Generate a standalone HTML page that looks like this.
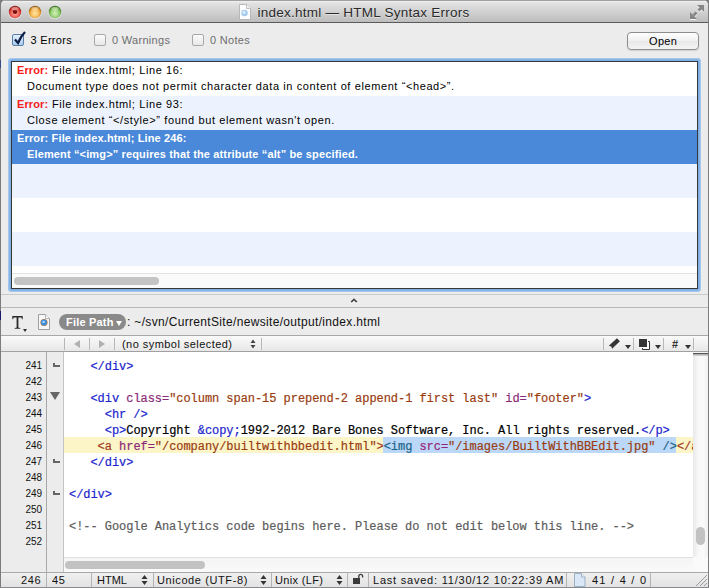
<!DOCTYPE html>
<html><head><meta charset="utf-8">
<style>
*{margin:0;padding:0;box-sizing:border-box}
html,body{width:709px;height:588px;overflow:hidden;background:#7c7c7c}
body{position:relative;font-family:"Liberation Sans",sans-serif;color:#000}
.a{position:absolute}
.t{position:absolute;white-space:nowrap;line-height:1}
#win{left:1px;top:0;width:707px;height:587px;background:#ececec;border-radius:5px 5px 0 0;overflow:hidden}
.tl{top:6px;width:12px;height:12px;border-radius:50%}
.cb{width:12px;height:12px;border:1px solid #a8a8a8;border-radius:2px;background:linear-gradient(#fbfbfb,#e8e8e8)}
.row{left:0;width:686px;height:34px}
.l1,.l2{font-size:11px;letter-spacing:.6px}
.err{color:#f4201a;font-weight:bold;letter-spacing:.12px}
.sel .l1,.sel .l2{font-weight:bold;letter-spacing:.14px;color:#fff}
.code{position:absolute;left:69px;font-family:"Liberation Mono",monospace;font-size:12px;letter-spacing:-.05px;-webkit-text-stroke:.2px currentColor;white-space:pre;line-height:16px;height:16px}
.ln{position:absolute;left:0;margin-top:.6px;width:42px;text-align:right;font-size:10px;letter-spacing:-.1px;line-height:16px;color:#111}
.tg{color:#1a24cc}.an{color:#8a2a78}.av{color:#9a3c10}.cm{color:#5c5c5c}.br{color:#a03a1c}
.sb{font-size:11px;letter-spacing:.6px;color:#111}
.vs{position:absolute;top:573px;width:1px;height:14px;background:#b4b4b4}
</style></head><body>
<!-- window -->
<div id="win" class="a"></div>
<!-- title bar -->
<div class="a" style="left:1px;top:0;width:707px;height:23px;border-radius:5px 5px 0 0;background:linear-gradient(#a0a0a0 0,#a0a0a0 1px,#f2f2f2 1px,#e2e2e2 3px,#bdbdbd 22px,#5a5a5a 22px)"></div>
<svg class="a" style="left:8px;top:5px" width="54" height="15" viewBox="0 0 54 15">
<defs>
<radialGradient id="gr" cx="50%" cy="60%" r="55%"><stop offset="0" stop-color="#ffb0a8"/><stop offset=".55" stop-color="#f06a62"/><stop offset=".85" stop-color="#c8302a"/><stop offset="1" stop-color="#8a1c18"/></radialGradient>
<radialGradient id="go" cx="50%" cy="60%" r="55%"><stop offset="0" stop-color="#ffe4a8"/><stop offset=".55" stop-color="#f8c060"/><stop offset=".85" stop-color="#d48a22"/><stop offset="1" stop-color="#946014"/></radialGradient>
<radialGradient id="gg" cx="50%" cy="60%" r="55%"><stop offset="0" stop-color="#d4f0b8"/><stop offset=".55" stop-color="#a0d480"/><stop offset=".85" stop-color="#66a840"/><stop offset="1" stop-color="#3e7224"/></radialGradient>
</defs>
<circle cx="7" cy="7" r="6.5" fill="#fff" opacity=".5" transform="translate(0 .8)"/>
<circle cx="27" cy="7" r="6.5" fill="#fff" opacity=".5" transform="translate(0 .8)"/>
<circle cx="47" cy="7" r="6.5" fill="#fff" opacity=".5" transform="translate(0 .8)"/>
<circle cx="7" cy="7" r="6.2" fill="url(#gr)"/>
<circle cx="27" cy="7" r="6.2" fill="url(#go)"/>
<circle cx="47" cy="7" r="6.2" fill="url(#gg)"/>
<circle cx="7" cy="6.8" r="2.2" fill="#7a1008"/>
<ellipse cx="7" cy="3.6" rx="3.5" ry="1.8" fill="#fff" opacity=".35"/>
<ellipse cx="27" cy="3.6" rx="3.5" ry="1.8" fill="#fff" opacity=".35"/>
<ellipse cx="47" cy="3.6" rx="3.5" ry="1.8" fill="#fff" opacity=".35"/>
</svg>
<!-- title doc icon -->
<svg class="a" style="left:239px;top:4px" width="12" height="16" viewBox="0 0 12 16"><path d="M.5 .5h7l4 4v11H.5z" fill="#fdfdfd" stroke="#b8b8b8"/><path d="M7.5 .5v4h4" fill="#f4f4f4" stroke="#c0c0c0"/><circle cx="5.5" cy="9" r="3.3" fill="#a8ccee"/><circle cx="5" cy="8.4" r="1.4" fill="#e0f0ff"/></svg>
<div class="t" style="left:257.5px;top:6px;font-size:13.5px;letter-spacing:.25px;color:#2a2a2a;text-shadow:0 1px 0 rgba(255,255,255,.5)">index.html — HTML Syntax Errors</div>
<!-- fullscreen icon -->
<svg class="a" style="left:689px;top:4px" width="17" height="17" viewBox="0 0 17 17"><g transform="translate(0 1)" fill="#f4f4f4" stroke="#f4f4f4"><path d="M8 1h7v7z" stroke="none"/><path d="M1 8v7h7z" stroke="none"/><path d="M12.5 3.5L9.5 6.5M4.5 11.5L7.5 8.5" stroke-width="2.6"/></g><g fill="#868686" stroke="#868686"><path d="M8 1h7v7z" stroke="none"/><path d="M1 8v7h7z" stroke="none"/><path d="M12.5 3.5L9.5 6.5M4.5 11.5L7.5 8.5" stroke-width="2.6"/></g></svg>

<!-- checkboxes -->
<div class="a cb" style="left:12px;top:34px;border-color:#5a7ea8;background:linear-gradient(#e4f0fc,#a8ccf0)"></div>
<svg class="a" style="left:12px;top:30px" width="14" height="16" viewBox="0 0 14 16"><path d="M3 9.5l3 3.5C8 8 10 5 13 2" stroke="#0a1a40" stroke-width="2.2" fill="none"/></svg>
<div class="t" style="left:30.5px;top:35px;font-size:11px;letter-spacing:.3px;color:#000">3 Errors</div>
<div class="a cb" style="left:94px;top:34px"></div>
<div class="t" style="left:112px;top:35px;font-size:11px;letter-spacing:.3px;color:#6e6e6e">0 Warnings</div>
<div class="a cb" style="left:192px;top:34px"></div>
<div class="t" style="left:210px;top:35px;font-size:11px;letter-spacing:.3px;color:#6e6e6e">0 Notes</div>
<div class="a" style="left:627px;top:32px;width:72px;height:18px;box-shadow:0 1px 1px rgba(0,0,0,.12);border:1px solid #8e8e8e;border-radius:4px;background:linear-gradient(#ffffff,#f0f0f0 50%,#e8e8e8 51%,#f4f4f4)"></div>
<div class="t" style="left:649px;top:36px;font-size:11px;letter-spacing:.35px">Open</div>

<!-- error list -->
<div class="a" style="left:8px;top:58px;width:693px;height:234px;border-radius:4px;box-shadow:inset 0 0 1.5px 1px #b0cdee;background:#7eaee6"></div>
<div class="a" style="left:11px;top:61px;width:687px;height:228px;border:1px solid #383838;background:#fff;overflow:hidden">
  <div class="a row" style="top:0;background:#fff"><div class="t l1" style="left:5px;top:3px"><span class="err">Error:</span> File index.html; Line 16:</div><div class="t l2" style="left:15px;top:19px">Document type does not permit character data in content of element “&lt;head&gt;”.</div></div>
  <div class="a row" style="top:34px;background:#edf3fe"><div class="t l1" style="left:5px;top:3px"><span class="err">Error:</span> File index.html; Line 93:</div><div class="t l2" style="left:15px;top:19px">Close element “&lt;/style&gt;” found but element wasn't open.</div></div>
  <div class="a row sel" style="top:68px;background:#4a88d9"><div class="t l1" style="left:5px;top:3px">Error: File index.html; Line 246:</div><div class="t l2" style="left:15px;top:19px">Element “&lt;img&gt;” requires that the attribute “alt” be specified.</div></div>
  <div class="a row" style="top:102px;background:#edf3fe"></div>
  <div class="a row" style="top:136px;background:#fff"></div>
  <div class="a row" style="top:170px;background:#edf3fe"></div>
  <div class="a" style="left:0;top:211px;width:687px;height:15px;background:#fafafa;border-top:1px solid #e2e2e2"></div>
  <div class="a" style="left:2px;top:215px;width:145px;height:8px;border-radius:4px;background:#c4c4c4"></div>
</div>

<!-- splitter -->
<div class="a" style="left:1px;top:294px;width:707px;height:1px;background:#cacaca"></div>
<svg class="a" style="left:350px;top:297px" width="8" height="7" viewBox="0 0 8 7"><path d="M1.2 5.2L4 2.4 6.8 5.2" stroke="#fff" stroke-width="1.7" fill="none" transform="translate(0 1)"/><path d="M1.2 5.2L4 2.4 6.8 5.2" stroke="#4a4a4a" stroke-width="1.7" fill="none"/></svg>
<div class="a" style="left:1px;top:307px;width:707px;height:1px;background:#b8b8b8"></div>

<!-- toolbar -->
<svg class="a" style="left:12px;top:316px" width="11" height="13" viewBox="0 0 11 13"><path d="M0.3 0h10.4v3.2h-.8L9.4 1.6H6.4v9.6l.3.6 1.6.3V12.8H2.7v-.7l1.6-.3.3-.6V1.6H1.6L1.1 3.2H.3z" fill="#2a2a2a"/></svg>
<div class="a" style="left:23px;top:329px;width:0;height:0;border-left:2px solid transparent;border-right:2px solid transparent;border-top:3px solid #333"></div>
<svg class="a" style="left:38px;top:314px" width="12" height="16" viewBox="0 0 12 16"><path d="M.5 .5h7l4 4v11H.5z" fill="#f8f8f8" stroke="#a0a0a0"/><path d="M7.5 .5v4h4" fill="#fff" stroke="#b0b0b0"/><circle cx="6" cy="8.5" r="3.6" fill="#b87840"/><circle cx="6" cy="8.5" r="2.9" fill="#3a90e0"/><circle cx="5.6" cy="7.9" r="1.2" fill="#a8d8ff"/></svg>
<div class="a" style="left:59px;top:314px;width:67px;height:16px;border-radius:8px;background:#8a8a8a"></div>
<div class="t" style="left:66px;top:317px;font-size:11px;font-weight:bold;color:#fff;letter-spacing:.2px">File Path</div>
<div class="a" style="left:116px;top:321px;width:0;height:0;border-left:3.5px solid transparent;border-right:3.5px solid transparent;border-top:5.5px solid #fff"></div>
<div class="t" style="left:127px;top:316px;font-size:12px;letter-spacing:.33px;color:#111">: ~/svn/CurrentSite/newsite/output/index.html</div>
<div class="a" style="left:1px;top:335px;width:707px;height:1px;background:#a8a8a8"></div>

<!-- nav bar -->
<div class="a" style="left:1px;top:336px;width:707px;height:16px;background:linear-gradient(#fafafa,#e6e6e6)"></div>
<div class="a" style="left:1px;top:351px;width:707px;height:1px;background:#a0a0a0"></div>
<div class="a" style="left:64px;top:338px;width:1px;height:12px;background:#b8b8b8"></div>
<div class="a" style="left:89px;top:338px;width:1px;height:12px;background:#b8b8b8"></div>
<div class="a" style="left:114px;top:338px;width:1px;height:12px;background:#b8b8b8"></div>
<div class="a" style="left:74px;top:340px;width:0;height:0;border-top:4px solid transparent;border-bottom:4px solid transparent;border-right:6px solid #b0b0b0"></div>
<div class="a" style="left:99px;top:340px;width:0;height:0;border-top:4px solid transparent;border-bottom:4px solid transparent;border-left:6px solid #b0b0b0"></div>
<div class="t" style="left:122px;top:339px;font-size:11px;letter-spacing:.45px;color:#111">(no symbol selected)</div>
<svg class="a" style="left:250px;top:338px" width="6" height="12" viewBox="0 0 6 12"><path d="M0.5 5L3 1.5 5.5 5z M0.5 7L3 10.5 5.5 7z" fill="#444"/></svg>
<div class="a" style="left:261px;top:338px;width:1px;height:12px;background:#b8b8b8"></div>
<div class="a" style="left:603px;top:338px;width:1px;height:12px;background:#b8b8b8"></div>
<div class="a" style="left:633px;top:338px;width:1px;height:12px;background:#b8b8b8"></div>
<div class="a" style="left:663px;top:338px;width:1px;height:12px;background:#b8b8b8"></div>
<div class="a" style="left:693px;top:338px;width:1px;height:12px;background:#b8b8b8"></div>
<svg class="a" style="left:604px;top:336px" width="18" height="15" viewBox="0 0 18 15"><path d="M4.8 9.8L13 2.3 15.9 5.2 8.1 12.8 7.3 10.6z" fill="#353535"/></svg>
<div class="a" style="left:625px;top:345px;width:0;height:0;border-left:3px solid transparent;border-right:3px solid transparent;border-top:4px solid #333"></div>
<svg class="a" style="left:638px;top:338px" width="13" height="13" viewBox="0 0 13 13"><path d="M4.5 3.5h7v8h-7z" fill="#fff" stroke="#333"/><path d="M1 1h8v8H1z" fill="#353535"/><path d="M1 9.5h8.5V1" stroke="#fff" fill="none"/></svg>
<div class="a" style="left:655px;top:345px;width:0;height:0;border-left:3px solid transparent;border-right:3px solid transparent;border-top:4px solid #333"></div>
<div class="t" style="left:672px;top:339px;font-size:11px;font-weight:bold;color:#333">#</div>
<div class="a" style="left:685px;top:345px;width:0;height:0;border-left:3px solid transparent;border-right:3px solid transparent;border-top:4px solid #333"></div>

<!-- code area -->
<div class="a" style="left:1px;top:352px;width:45px;height:220px;background:#ececec"></div>
<div class="a" style="left:46px;top:352px;width:1px;height:220px;background:#a8a8a8"></div>
<div class="a" style="left:47px;top:352px;width:16px;height:220px;background:#ececec"></div>
<div class="a" style="left:63px;top:352px;width:1px;height:220px;background:#c4c4c4"></div>
<div class="a" style="left:64px;top:352px;width:629px;height:205px;background:#fff"></div>
<!-- highlight line 246 -->
<div class="a" style="left:64px;top:437px;width:629px;height:16px;background:#fcf5c8"></div>
<div class="a" style="left:383px;top:437px;width:293px;height:16px;background:#bcd8f8"></div>

<div class="ln" style="top:357px">241</div>
<div class="ln" style="top:373px">242</div>
<div class="ln" style="top:389px">243</div>
<div class="ln" style="top:405px">244</div>
<div class="ln" style="top:421px">245</div>
<div class="ln" style="top:437px">246</div>
<div class="ln" style="top:453px">247</div>
<div class="ln" style="top:469px">248</div>
<div class="ln" style="top:485px">249</div>
<div class="ln" style="top:501px">250</div>
<div class="ln" style="top:517px">251</div>
<div class="ln" style="top:533px">252</div>

<!-- fold marks -->
<svg class="a" style="left:53px;top:363px" width="7" height="4"><path d="M0 0h2v2h5v2H0z" fill="#666"/></svg>
<svg class="a" style="left:50px;top:392px" width="10" height="8"><path d="M0 0h10L5 8z" fill="#666"/></svg>
<svg class="a" style="left:53px;top:459px" width="7" height="4"><path d="M0 0h2v2h5v2H0z" fill="#666"/></svg>
<svg class="a" style="left:53px;top:491px" width="7" height="4"><path d="M0 0h2v2h5v2H0z" fill="#666"/></svg>

<div class="code" style="top:359px">   <span class="tg">&lt;/div&gt;</span></div>
<div class="code" style="top:391px">   <span class="tg">&lt;div</span> <span class="an">class=</span><span class="av">"column span-15 prepend-2 append-1 first last"</span> <span class="an">id=</span><span class="av">"footer"</span><span class="tg">&gt;</span></div>
<div class="code" style="top:407px">     <span class="tg">&lt;hr /&gt;</span></div>
<div class="code" style="top:423px">     <span class="tg">&lt;p&gt;</span>Copyright <span class="tg">&amp;copy;</span>1992-2012 Bare Bones Software, Inc. All rights reserved.<span class="tg">&lt;/p&gt;</span></div>
<div class="code" style="top:439px">    <span class="br">&lt;a</span> <span class="an">href=</span><span class="av">"/company/builtwithbbedit.html"</span><span class="br">&gt;</span><span style="color:#1a6488">&lt;img</span> <span style="color:#962478">src=</span><span class="av">"/images/BuiltWithBBEdit.jpg"</span> <span style="color:#1a6488">/&gt;</span><span class="br">&lt;/a</span></div>
<div class="code" style="top:455px">   <span class="tg">&lt;/div&gt;</span></div>
<div class="code" style="top:487px"><span class="tg">&lt;/div&gt;</span></div>
<div class="code cm" style="top:519px">&lt;!-- Google Analytics code begins here. Please do not edit below this line. --&gt;</div>

<!-- cover overflow right of text area -->
<div class="a" style="left:693px;top:352px;width:15px;height:220px;background:linear-gradient(90deg,#e8e8e8,#f8f8f8 35%,#fafafa 70%,#f0f0f0)"></div>
<div class="a" style="left:693px;top:352px;width:15px;height:1px;background:#f4f4f4"></div><div class="a" style="left:693px;top:353px;width:15px;height:1px;background:#555"></div><div class="a" style="left:693px;top:354px;width:15px;height:2px;background:linear-gradient(#a8a8a8,#d8d8d8)"></div>
<div class="a" style="left:696px;top:527px;width:9px;height:18px;border-radius:4.5px;background:#c2c2c2"></div>
<div class="a" style="left:693px;top:557px;width:15px;height:15px;background:#fafafa"></div>
<!-- h scrollbar -->
<div class="a" style="left:64px;top:557px;width:629px;height:15px;background:linear-gradient(#f4f4f4,#fafafa);border-top:1px solid #e0e0e0"></div>
<div class="a" style="left:65px;top:561px;width:140px;height:8px;border-radius:4px;background:#c2c2c2"></div>

<!-- status bar -->
<div class="a" style="left:1px;top:572px;width:707px;height:1px;background:#a8a8a8"></div>
<div class="a" style="left:1px;top:573px;width:707px;height:14px;background:linear-gradient(#f0f0f0,#e2e2e2)"></div>
<div class="t sb" style="left:21px;top:575px">246</div>
<div class="vs" style="left:46px"></div>
<div class="t sb" style="left:52px;top:575px">45</div>
<div class="vs" style="left:91px"></div>
<div class="t sb" style="left:97px;top:575px;letter-spacing:0">HTML</div>
<svg class="a" style="left:141px;top:574px" width="7" height="12" viewBox="0 0 7 12"><path d="M0.5 5L3.5 1 6.5 5z M0.5 7L3.5 11 6.5 7z" fill="#333"/></svg>
<div class="vs" style="left:153px"></div>
<div class="t sb" style="left:157px;top:575px">Unicode (UTF-8)</div>
<svg class="a" style="left:260px;top:574px" width="7" height="12" viewBox="0 0 7 12"><path d="M0.5 5L3.5 1 6.5 5z M0.5 7L3.5 11 6.5 7z" fill="#333"/></svg>
<div class="vs" style="left:271px"></div>
<div class="t sb" style="left:275px;top:575px;letter-spacing:.35px">Unix (LF)</div>
<svg class="a" style="left:336px;top:574px" width="7" height="12" viewBox="0 0 7 12"><path d="M0.5 5L3.5 1 6.5 5z M0.5 7L3.5 11 6.5 7z" fill="#333"/></svg>
<div class="vs" style="left:347px"></div>
<svg class="a" style="left:352px;top:573px" width="12" height="12" viewBox="0 0 12 12"><path d="M1 5h7v6H1z" fill="#3a3a3a"/><path d="M6.8 5V3.2a1.9 1.9 0 0 1 3.8 0V4.6" stroke="#3a3a3a" stroke-width="1.3" fill="none"/></svg>
<div class="vs" style="left:368px"></div>
<div class="t sb" style="left:373px;top:575px;letter-spacing:.78px">Last saved: 11/30/12 10:22:39 AM</div>
<div class="vs" style="left:566px"></div>
<svg class="a" style="left:573px;top:573px" width="13" height="14" viewBox="0 0 13 14"><path d="M1.5 .5h7l3.5 3.5v9.5H1.5z" fill="#dae8f6" stroke="#9ab0c6"/><path d="M8.5 .5v3.5h3.5" fill="#f4f8fc" stroke="#9ab0c6"/></svg>
<div class="t sb" style="left:592px;top:575px;letter-spacing:1.25px">41 / 4 / 0</div>
<div class="vs" style="left:650px"></div>
<svg class="a" style="left:694px;top:573px" width="14" height="14" viewBox="0 0 14 14"><path d="M2 13L13 2 M6 13L13 6 M10 13L13 10" stroke="#9a9a9a" stroke-width="1"/></svg>
<!-- window right edge -->
<div class="a" style="left:708px;top:0;width:1px;height:588px;background:#7c7c7c"></div><div class="a" style="left:0;top:311px;width:1px;height:9px;background:#1a1a6a"></div><div class="a" style="left:0;top:60px;width:1px;height:8px;background:#3a4a80"></div>
<div class="a" style="left:0;top:587px;width:709px;height:1px;background:#8a8a8c"></div>
</body></html>
